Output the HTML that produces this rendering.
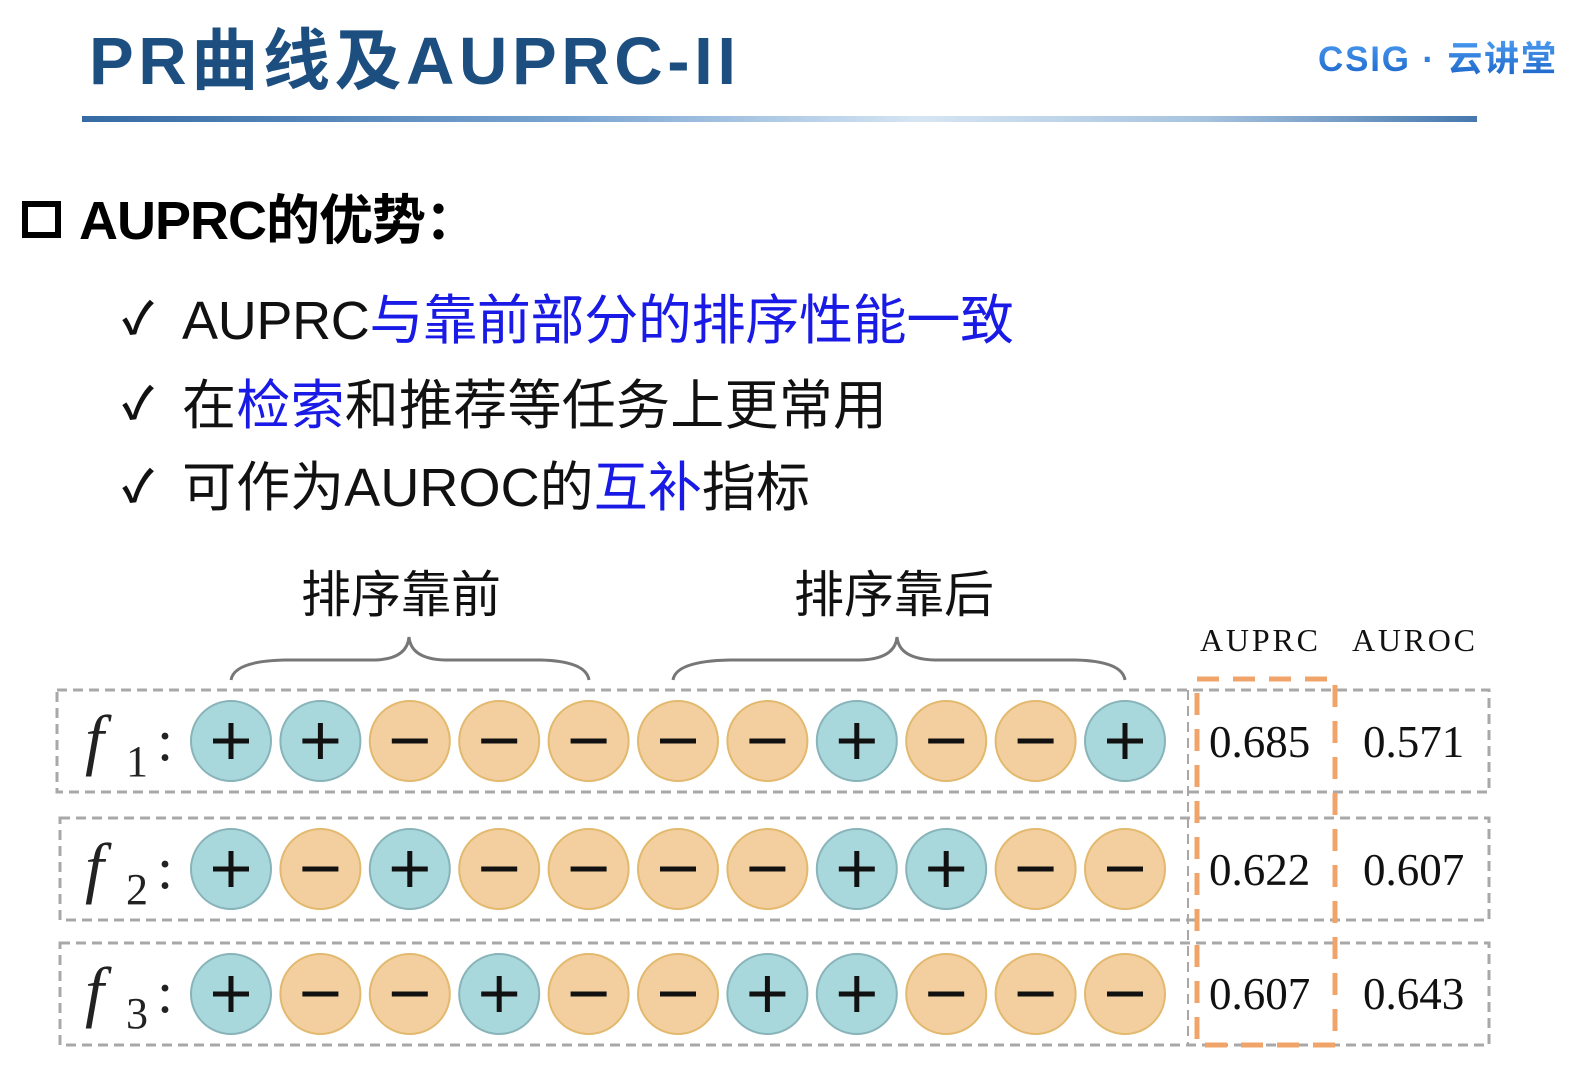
<!DOCTYPE html>
<html><head><meta charset="utf-8"><style>
html,body{margin:0;padding:0;background:#fff;width:1591px;height:1076px;overflow:hidden}
svg{display:block}
.cjk{font-family:"Liberation Sans","Noto Sans CJK SC",sans-serif}
.ser{font-family:"Liberation Serif","DejaVu Serif",serif}
</style></head><body>
<svg width="1591" height="1076" viewBox="0 0 1591 1076" xmlns="http://www.w3.org/2000/svg">
<defs>
<linearGradient id="bar" x1="0" x2="1" y1="0" y2="0">
<stop offset="0" stop-color="#356aa3"/><stop offset="0.35" stop-color="#7aa5d2"/><stop offset="0.6" stop-color="#d5e5f3"/><stop offset="0.8" stop-color="#a8c4df"/><stop offset="1" stop-color="#4678ae"/>
</linearGradient>
<linearGradient id="logo" x1="0" x2="0" y1="0" y2="1">
<stop offset="0" stop-color="#4a9af0"/><stop offset="1" stop-color="#1a64c8"/>
</linearGradient>
<g id="P"><circle r="40" fill="#a9d8dc" stroke="#88b4b9" stroke-width="2"/><rect x="-18" y="-2.5" width="36" height="5" fill="#111"/><rect x="-2.5" y="-18" width="5" height="36" fill="#111"/></g>
<g id="M"><circle r="40" fill="#f3cf9f" stroke="#e2b96e" stroke-width="2"/><rect x="-18" y="-2.5" width="36" height="5" fill="#111"/></g>
</defs>
<!-- title -->
<text x="89" y="84" class="cjk" font-size="67" font-weight="bold" fill="#1c4f80" letter-spacing="5" textLength="652">PR曲线及AUPRC-II</text>
<text x="1318" y="71" class="cjk" font-size="35" font-weight="bold" fill="url(#logo)" textLength="238">CSIG · 云讲堂</text>
<rect x="82" y="116" width="1395" height="6" fill="url(#bar)"/>
<!-- heading -->
<rect x="25" y="204" width="33" height="31" fill="none" stroke="#000" stroke-width="6"/>
<text x="79" y="239" class="cjk" font-size="54" font-weight="bold" fill="#000" textLength="400">AUPRC的优势：</text>
<!-- bullets -->
<g class="cjk" font-size="54" fill="#111">
<text x="122" y="334" font-size="44" font-weight="bold">✓</text>
<text x="182" y="339" textLength="832">AUPRC<tspan fill="#1a1ae6">与靠前部分的排序性能一致</tspan></text>
<text x="122" y="419" font-size="44" font-weight="bold">✓</text>
<text x="182" y="424" textLength="705">在<tspan fill="#1a1ae6">检索</tspan>和推荐等任务上更常用</text>
<text x="122" y="502" font-size="44" font-weight="bold">✓</text>
<text x="182" y="506" textLength="628">可作为AUROC的<tspan fill="#1a1ae6">互补</tspan>指标</text>
</g>
<!-- labels -->
<text x="401" y="612" class="cjk" font-size="50" text-anchor="middle" fill="#111">排序靠前</text>
<text x="894" y="612" class="cjk" font-size="50" text-anchor="middle" fill="#111">排序靠后</text>
<g fill="none" stroke="#777" stroke-width="3">
<path d="M231 680 Q234 661 285 660 L375 660 Q407 659 409 637 Q411 659 445 660 L540 660 Q586 661 589 680"/>
<path d="M673 680 Q676 661 730 660 L860 660 Q895 659 897 637 Q899 659 935 660 L1075 660 Q1122 661 1125 680"/>
</g>
<text x="1200" y="651" class="ser" font-size="32" fill="#111" textLength="118">AUPRC</text>
<text x="1352" y="651" class="ser" font-size="32" fill="#111" textLength="123">AUROC</text>
<!-- row boxes -->
<g fill="none" stroke="#a8a8a8" stroke-width="3" stroke-dasharray="10 6">
<rect x="57" y="690" width="1432" height="102"/>
<rect x="60" y="818" width="1429" height="102"/>
<rect x="60" y="943" width="1429" height="102"/>
<line x1="1188" y1="690" x2="1188" y2="1045" stroke-width="2"/>
</g>
<rect x="1197" y="679" width="138" height="366" fill="none" stroke="#f1a46a" stroke-width="5" stroke-dasharray="22 14"/>
<!-- f labels -->
<g class="ser" fill="#222">
<text x="85" y="762" font-size="68" font-style="italic">f</text><text x="126" y="776" font-size="44">1</text><text x="157" y="760" font-size="58">:</text>
<text x="85" y="890" font-size="68" font-style="italic">f</text><text x="126" y="904" font-size="44">2</text><text x="157" y="888" font-size="58">:</text>
<text x="85" y="1014" font-size="68" font-style="italic">f</text><text x="126" y="1028" font-size="44">3</text><text x="157" y="1012" font-size="58">:</text>
</g>
<!-- values -->
<g class="ser" font-size="45" fill="#111">
<text x="1209" y="757">0.685</text><text x="1363" y="757">0.571</text>
<text x="1209" y="885">0.622</text><text x="1363" y="885">0.607</text>
<text x="1209" y="1009">0.607</text><text x="1363" y="1009">0.643</text>
</g>
<g transform="translate(0,741)">
<use href="#P" x="231"/><use href="#P" x="320.4"/><use href="#M" x="409.8"/><use href="#M" x="499.2"/><use href="#M" x="588.6"/><use href="#M" x="678"/><use href="#M" x="767.4"/><use href="#P" x="856.8"/><use href="#M" x="946.2"/><use href="#M" x="1035.6"/><use href="#P" x="1125"/>
</g>
<g transform="translate(0,869)">
<use href="#P" x="231"/><use href="#M" x="320.4"/><use href="#P" x="409.8"/><use href="#M" x="499.2"/><use href="#M" x="588.6"/><use href="#M" x="678"/><use href="#M" x="767.4"/><use href="#P" x="856.8"/><use href="#P" x="946.2"/><use href="#M" x="1035.6"/><use href="#M" x="1125"/>
</g>
<g transform="translate(0,994)">
<use href="#P" x="231"/><use href="#M" x="320.4"/><use href="#M" x="409.8"/><use href="#P" x="499.2"/><use href="#M" x="588.6"/><use href="#M" x="678"/><use href="#P" x="767.4"/><use href="#P" x="856.8"/><use href="#M" x="946.2"/><use href="#M" x="1035.6"/><use href="#M" x="1125"/>
</g>
</svg>
</body></html>
